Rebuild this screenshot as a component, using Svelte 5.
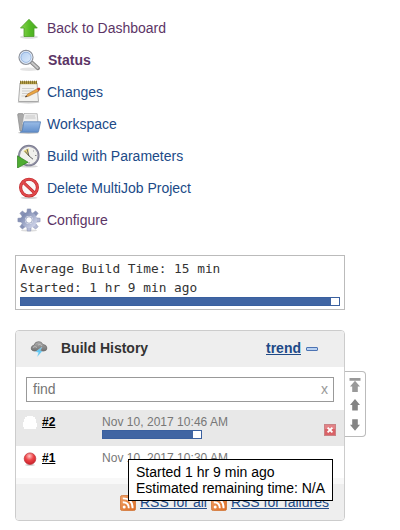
<script>
  const tasks = [
    { icon: 'up', label: 'Back to Dashboard', visited: true },
    { icon: 'search', label: 'Status', visited: true, current: true },
    { icon: 'notepad', label: 'Changes' },
    { icon: 'folder', label: 'Workspace' },
    { icon: 'clock', label: 'Build with Parameters' },
    { icon: 'stop', label: 'Delete MultiJob Project' },
    { icon: 'gear', label: 'Configure', visited: true }
  ];
</script>

{#snippet taskIcon(name)}
  <svg width="24" height="24" viewBox="0 0 24 24">
    {#if name === 'up'}
      <ellipse cx="12" cy="21" rx="9" ry="1.7" fill="#777" opacity=".25" />
      <path d="M12 3.3 20.3 12H17v8.5H7V12H3.5Z" fill="url(#green)" stroke="#4b9c28" stroke-width=".8" />
    {:else if name === 'search'}
      <ellipse cx="12" cy="21.3" rx="9" ry="1.7" fill="#777" opacity=".2" />
      <path d="m14.7 14.6 6.3 5.6" stroke="#888" stroke-width="4" stroke-linecap="round" />
      <path d="m14.7 14.6 6 5.3" stroke="#c8c8c8" stroke-width="2" stroke-linecap="round" />
      <circle cx="9" cy="9.3" r="7" fill="url(#lens)" stroke="#8e9199" stroke-width="1.2" />
      <circle cx="9" cy="9.3" r="5.8" fill="none" stroke="#eef3fa" />
      <circle cx="9" cy="9.3" r="5.1" fill="none" stroke="#83a5d6" stroke-width=".7" />
    {:else if name === 'notepad'}
      <ellipse cx="11.5" cy="22.2" rx="11" ry="1.3" fill="#777" opacity=".35" />
      <path d="M3 3h17l1.5 18.5h-20Z" fill="#f2f2ef" stroke="#999" stroke-width=".8" />
      <path d="M3 1.2h17v3H3z" fill="#b6a048" />
      <path d="M3.5 .7v3.2M5.5 .7v3.2M7.5 .7v3.2M9.5 .7v3.2M11.5 .7v3.2M13.5 .7v3.2M15.5 .7v3.2M17.5 .7v3.2M19.5 .7v3.2" stroke="#776624" stroke-width=".8" />
      <path d="M5 8.5h12M5 11h11M5 13.5h8M4.5 16h6" stroke="#c9c9c7" stroke-width=".9" />
      <path d="m8.5 17 2.2-3L20.3 8.7l1.7 2.3-10.2 5.1Z" fill="#eaa743" stroke="#a76828" stroke-width=".6" />
      <path d="m20 8.6 2-1.1q1.5.5 1.3 2l-1.6 1.6Z" fill="#c83224" />
      <path d="m8 17.3 1.1-1.8 1 1.2Z" fill="#333" />
    {:else if name === 'folder'}
      <ellipse cx="11.5" cy="20.7" rx="10.5" ry="1.3" fill="#777" opacity=".4" />
      <path d="M.7 2.8q0-1.2 1-1.2h4l1 1.5H19V19H3Z" fill="#aaa" stroke="#888" stroke-width=".7" />
      <path d="m7 1.5 13.2.2 1 11H5Z" fill="#eee" stroke="#999" stroke-width=".6" />
      <path d="M8.5 4h9.5M8 6h10.5" stroke="#bbb" stroke-width=".8" />
      <path d="M6.8 9.8h16.8l-2 9.5q-.2.9-1.2.9H3.2q2-.3 2.2-2Z" fill="url(#folderBlue)" stroke="#5680b8" stroke-width=".8" />
    {:else if name === 'clock'}
      <ellipse cx="12" cy="22.3" rx="9" ry="1.3" fill="#777" opacity=".3" />
      <circle cx="11.8" cy="11.6" r="9.8" fill="#f1f1ed" stroke="#7c7c91" stroke-width="1.9" />
      <circle cx="11.8" cy="11.6" r="9.4" fill="none" stroke="#a9a9b8" stroke-width=".6" />
      <path d="m11.5 12-5.2-5 5.5-2.7Z" fill="#ead77a" />
      <path d="m8 7.3 4 4.7M10 5l2 7 4 3.2" stroke="#555" stroke-width=".9" fill="none" />
      <path d="M18 11.5h1.5M12 18v1.5M17 6.5l-.8.8" stroke="#888" />
      <path d="M.5 11.8 11 18.2.5 24Z" fill="#4fac32" stroke="#2d801d" stroke-width=".7" />
    {:else if name === 'stop'}
      <ellipse cx="12" cy="21.8" rx="8.5" ry="1.2" fill="#777" opacity=".3" />
      <circle cx="12" cy="11.6" r="8.4" fill="#faf8f8" stroke="#c0272b" stroke-width="3.1" />
      <path d="m6.1 6.2 11.7 10.9" stroke="#c0272b" stroke-width="3" />
      <circle cx="12" cy="11.6" r="8.4" fill="none" stroke="#e04a4c" stroke-width="1.9" />
      <path d="m6.1 6.2 11.7 10.9" stroke="#e04a4c" stroke-width="1.9" />
    {:else}
      <ellipse cx="12" cy="22.5" rx="8" ry="1.1" fill="#777" opacity=".25" />
      {#each [0, 45, 90, 135, 180, 225, 270, 315] as angle}
        <path d="M9.7 6 10.3.9h3.4l.6 5.1Z" fill={angle > 45 && angle < 225 ? '#b5bbd6' : '#8792b6'} stroke="#7d87aa" stroke-width=".5" transform="rotate({angle} 12 12)" />
      {/each}
      <circle cx="12" cy="12" r="6" fill="none" stroke="url(#gearBlue)" stroke-width="4.2" />
      <circle cx="12" cy="12" r="3.3" fill="#fff" stroke="#838eb3" stroke-width=".8" />
    {/if}
  </svg>
{/snippet}

{#snippet rss()}
  <svg class="rss" width="16" height="16" viewBox="0 0 16 16">
    <rect x=".4" y=".4" width="15.2" height="15.2" rx="2" fill="url(#rssOrange)" stroke="#cf702f" stroke-width=".8" />
    <circle cx="4.2" cy="12" r="1.5" fill="#fff" />
    <path d="M2.8 7.2q6 0 6 6M2.8 3.4q9.8 0 9.8 9.8" stroke="#fff" stroke-width="1.9" fill="none" />
  </svg>
{/snippet}

<svg class="defs" width="0" height="0">
  <defs>
    <linearGradient id="green"><stop stop-color="#8bd650" /><stop offset=".55" stop-color="#55bb25" /><stop offset="1" stop-color="#48a920" /></linearGradient>
    <linearGradient id="lens" x1="0" y1="0" x2="1" y2="1"><stop stop-color="#aac9f0" /><stop offset="1" stop-color="#e6f1fd" /></linearGradient>
    <linearGradient id="folderBlue" x1="0" y1="0" x2="0" y2="1"><stop stop-color="#9abce7" /><stop offset="1" stop-color="#628fcb" /></linearGradient>
    <linearGradient id="gearBlue" x1="0" y1="0" x2="1" y2="1"><stop stop-color="#7986ad" /><stop offset="1" stop-color="#d0d5ea" /></linearGradient>
    <linearGradient id="rssOrange" x1="0" y1="0" x2="1" y2="1"><stop stop-color="#efa067" /><stop offset="1" stop-color="#dd6b22" /></linearGradient>
    <radialGradient id="redBall" cx=".45" cy=".28" r=".7"><stop stop-color="#ffc4c4" /><stop offset=".5" stop-color="#ee4548" /><stop offset="1" stop-color="#c9222b" /></radialGradient>
    <linearGradient id="cloud" x1="0" y1="0" x2="0" y2="1"><stop stop-color="#b0b0b0" /><stop offset="1" stop-color="#727272" /></linearGradient>
  </defs>
</svg>

<main>
  <nav class="tasks">
    {#each tasks as task}
      <a href="#top" class="task" class:visited={task.visited} class:current={task.current}>
        {@render taskIcon(task.icon)}
        <span>{task.label}</span>
      </a>
    {/each}
  </nav>

  <section class="summary">
    <div>Average Build Time: 15 min</div>
    <div>Started: 1 hr 9 min ago</div>
    <div class="bar"><i style="width: 310px"></i></div>
  </section>

  <div class="history-wrap">
    <section class="history">
      <header>
        <svg width="18" height="18" viewBox="0 0 18 18">
          <path d="M4 11Q1 10.500 1.200 8 1.500 5.500 4 5.200 5 1.500 8.700 1.700q3-.2 4.200 2.800 3.800.2 4 3.500 0 2.800-3 3Z" fill="url(#cloud)" stroke="#666" stroke-width=".7" />
          <path d="M3 7.500q2-2 4 0M8 5q2-2 4 1" fill="none" stroke="#c4c4c4" stroke-width=".8" />
          <path d="M12 7 5.500 11.800l3 .6-1.200 4.300 5-5.600-2.100-.3Z" fill="#62c7f2" stroke="#bde8fa" stroke-width=".3" />
        </svg>
        <h2>Build History</h2>
        <a href="#top" class="trend">trend</a>
        <span class="collapse"></span>
      </header>
      <div class="find"><span>find</span><span class="clear">x</span></div>
      <div class="build running">
        <svg width="14" height="15" viewBox="0 0 14 15"><path d="M4 0h6v1h2v2h1v4h1v4h-1v2H1v-2H0V6h1V3h1V1h2Z" fill="#fff" /></svg>
        <a href="#top" class="number">#2</a>
        <div class="details"><span>Nov 10, 2017 10:46 AM</span><div class="bar"><i style="width: 90px"></i></div></div>
        <svg class="cancel" width="12" height="12" viewBox="0 0 12 12">
          <rect x=".5" y=".5" width="11" height="11" fill="#d96267" stroke="#c98285" />
          <path d="M1 1h10v4H1z" fill="#e89497" opacity=".65" />
          <path d="m3.600 3.600 4.800 4.800m0-4.800L3.600 8.400" stroke="#fff" stroke-width="1.9" />
        </svg>
      </div>
      <div class="build">
        <svg width="14" height="14" viewBox="0 0 14 14"><ellipse cx="7" cy="13" rx="5" ry=".8" fill="#777" opacity=".4" /><circle cx="7" cy="6.7" r="5.8" fill="url(#redBall)" stroke="#bc3038" stroke-width=".7" /></svg>
        <a href="#top" class="number">#1</a>
        <div class="details"><span>Nov 10, 2017 10:30 AM</span></div>
      </div>
      <footer>
        {@render rss()}<a href="#top">RSS for all</a>
        {@render rss()}<a href="#top" class="fail">RSS for failures</a>
      </footer>
    </section>
    <aside>
      <svg width="12" height="15" viewBox="0 0 12 15"><path d="M.5 0h11v2.700H.5zM6 2.700l5 5.700H8.800V14H3.200V8.400H1Z" fill="#999" /></svg>
      <svg width="12" height="12" viewBox="0 0 12 12"><path d="m6 0 5 6H8.800v5.500H3.200V6H1Z" fill="#848484" /></svg>
      <svg width="12" height="12" viewBox="0 0 12 12"><path d="M3.200.3h5.600v5.400H11L6 11.800 1 5.700h2.200Z" fill="#848484" /></svg>
    </aside>
    <div class="tooltip" role="tooltip"><div>Started 1 hr 9 min ago</div><div>Estimated remaining time: N/A</div></div>
  </div>
</main>

<style>
  :global(body) { background: #fff; overflow: hidden; }
  * { box-sizing: border-box; }
  svg { flex: none; display: block; }
  .defs { position: absolute; }
  main { width: 400px; height: 530px; padding: 12px 0 0 15px; font: 14px/16px "Liberation Sans", Arial, sans-serif; color: #333; overflow: hidden; }
  .task { display: flex; align-items: center; height: 32px; padding-left: 2px; gap: 6px; color: #204a87; text-decoration: none; white-space: nowrap; }
  .task.visited { color: #5c3566; }
  .task.current { font-weight: bold; gap: 7px; }
  .summary { width: 330px; height: 55px; margin-top: 19px; padding: 3px 4px 0; border: 1px solid #bbb; font: 12.8px/19px "DejaVu Sans Mono", monospace; white-space: nowrap; }
  .summary div { height: 19px; }
  .bar { border: 1px solid #3a609f; background: #fff; }
  .bar i { display: block; height: 100%; background: #4065a3; }
  .summary .bar { height: 9px; width: 320px; }
  .history-wrap { position: relative; display: flex; align-items: flex-start; margin-top: 20px; }
  .history { width: 330px; height: 191px; border: 1px solid #ccc; border-radius: 4px; overflow: hidden; background: #fff; }
  header { display: flex; align-items: center; height: 36px; background: #eee; padding-left: 14px; }
  h2 { margin: 0 0 2px 13px; font-size: 14px; line-height: 16px; width: 205px; }
  .trend { color: #204a87; font-weight: bold; margin-bottom: 2px; text-underline-offset: 1px; }
  .collapse { width: 12px; height: 4px; margin: 0 0 1px 5px; border: 1px solid #4c73b3; border-radius: 1px; background: #b9d1f1; }
  .find { display: flex; align-items: center; justify-content: space-between; width: 308px; height: 25px; margin: 10px 0 8px 10px; padding: 0 5px 0 6px; border: 1px solid #999; color: #757575; }
  .find span { margin-bottom: 1px; }
  .find .clear { color: #999; }
  .build { display: flex; height: 32px; padding-left: 7px; align-items: flex-start; }
  .build > svg { margin-top: 6px; }
  .build.running { height: 36px; background: #e8e8e8; }
  .number { width: 60px; margin-left: 5px; padding-top: 4px; font-weight: bold; font-size: 12px; color: #000; text-underline-offset: 1px; }
  .details { width: 222px; padding-top: 4px; font-size: 12px; color: #777; }
  .details span { display: block; height: 16px; letter-spacing: .03px; }
  .details .bar { width: 100px; height: 9px; }
  .build > .cancel { margin-top: 14px; }
  footer { display: flex; align-items: flex-start; height: 42px; padding: 11px 0 0 104px; border-top: 6px solid #f8f8f8; background: #eee; font-size: 14px; }
  footer a { color: #204a87; margin: -1px 4px 0 4px; white-space: nowrap; text-underline-offset: 1px; }
  aside { display: flex; flex-direction: column; align-items: center; width: 22px; height: 66px; margin: 41px 0 0 -1px; padding-top: 6px; border: 1px solid #bbb; border-left-color: #ccc; border-radius: 0 4px 4px 0; background: #fff; }
  aside svg + svg { margin-top: 6px; }
  aside svg:last-child { margin-top: 8px; }
  .tooltip { position: absolute; left: 113px; top: 129px; width: 205px; height: 42px; padding: 4px 7px; border: 1px solid #000; background: #fff; color: #000; white-space: nowrap; }
</style>
